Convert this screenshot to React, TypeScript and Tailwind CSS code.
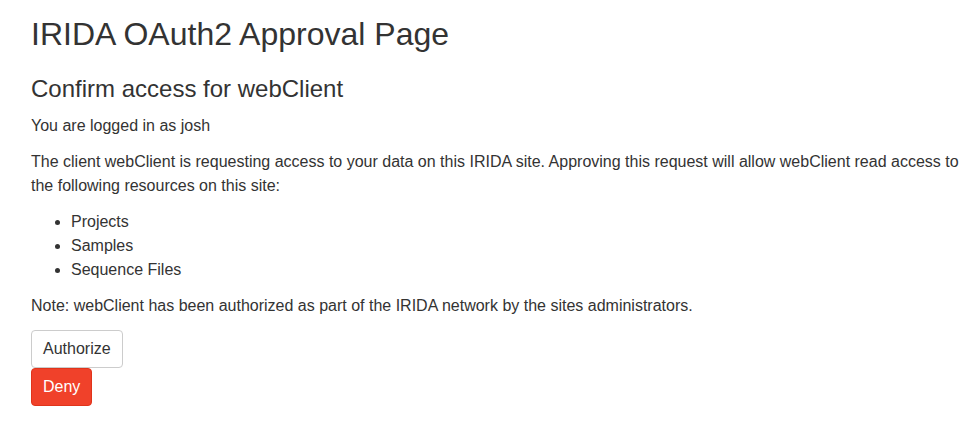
export default function App() {
  return (
    <div
      className="bg-white text-[#333] pl-[31px] pr-[15px] text-[16px] leading-[24px]"
      style={{ fontFamily: '"Liberation Sans", Arial, Helvetica, sans-serif' }}
    >
      <h1 className="pt-[15px] text-[32px] leading-[38px] font-normal">IRIDA OAuth2 Approval Page</h1>
      <h2 className="mt-[21px] text-[24px] leading-[29px] font-normal">Confirm access for webClient</h2>
      <p className="mt-[11px]">You are logged in as josh</p>
      <p className="mt-[12px]">
        The client webClient is requesting access to your data on this IRIDA site. Approving this request will allow
        webClient read access to the following resources on this site:
      </p>
      <ul className="mt-[12px] list-disc pl-[40px]">
        <li>Projects</li>
        <li>Samples</li>
        <li>Sequence Files</li>
      </ul>
      <p className="mt-[12px]">Note: webClient has been authorized as part of the IRIDA network by the sites administrators.</p>
      <div className="mt-[12px] flex flex-col items-start">
        <button className="px-[11px] py-[6px] border border-[#ccc] rounded-[4px] bg-white text-[#333] leading-[24px]">
          Authorize
        </button>
        <button className="px-[11px] py-[6px] border border-[#e0341b] rounded-[4px] bg-[#f0412a] text-white leading-[24px]">
          Deny
        </button>
      </div>
    </div>
  );
}
